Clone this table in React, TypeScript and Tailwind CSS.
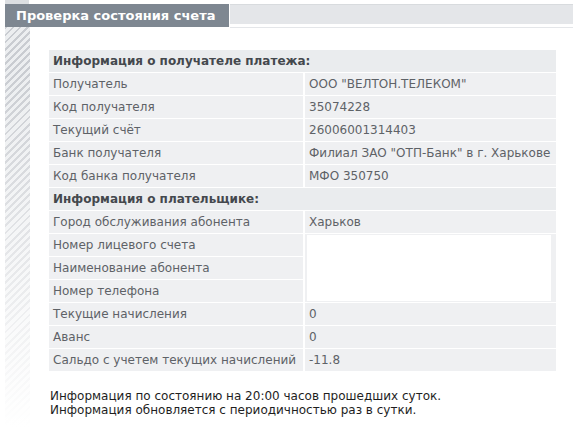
const payee: [string, string][] = [
  ["Получатель", 'ООО "ВЕЛТОН.ТЕЛЕКОМ"'],
  ["Код получателя", "35074228"],
  ["Текущий счёт", "26006001314403"],
  ["Банк получателя", 'Филиал ЗАО "ОТП-Банк" в г. Харькове'],
  ["Код банка получателя", "МФО 350750"],
];

const tail: [string, string][] = [
  ["Текущие начисления", "0"],
  ["Аванс", "0"],
  ["Сальдо с учетем текущих начислений", "-11.8"],
];

function Cell({ children, bold }: { children?: React.ReactNode; bold?: boolean }) {
  return (
    <div
      className={
        "flex items-center bg-[#eff0f2] px-[4px] whitespace-nowrap " +
        (bold ? "font-bold text-[#44484d]" : "text-[#5e6267]")
      }
    >
      {children}
    </div>
  );
}

export default function App() {
  return (
    <div className="w-[573px] h-[427px] overflow-hidden bg-white text-[12px] font-['DejaVu_Sans',Verdana,sans-serif]">
      <div className="ml-[5px] h-[4px] w-[24px] bg-[#dcdfe2]" />

      {/* title bar */}
      <div className="flex ml-[5px] h-[23px]">
        <div className="w-[224px] bg-[#7e8791] text-white font-bold text-[13px] pl-[11px] flex items-center">
          Проверка состояния счета
        </div>
        <div className="flex-1 ml-[1px] bg-[#e4e6e9] border-t border-[#d8dbde] border-b-[3px] border-b-white shadow-[0_1px_0_#e4e6e9]" />
      </div>

      <div className="flex">
        <div className="ml-[5px] w-[25px] h-[400px] bg-[linear-gradient(to_bottom,rgba(255,255,255,0)_10%,rgba(255,255,255,1)_100%),repeating-linear-gradient(135deg,#c9ccd1_0px,#c9ccd1_2px,#eceef0_2px,#eceef0_5px)]" />

        <div className="ml-[19px] mt-[23px]">
          <div className="grid grid-cols-[254px_251px] gap-x-[2px] gap-y-[1px] auto-rows-[22px]">
            <div className="col-span-2 flex items-center bg-[#eaecee] px-[4px] font-bold text-[#44484d]">
              Информация о получателе платежа:
            </div>
            {payee.map(([k, v]) => (
              <>
                <Cell key={k}>{k}</Cell>
                <Cell key={k + "v"}>{v}</Cell>
              </>
            ))}
            <div className="col-span-2 flex items-center bg-[#eaecee] px-[4px] font-bold text-[#44484d]">
              Информация о плательщике:
            </div>
            <Cell>Город обслуживания абонента</Cell>
            <Cell>Харьков</Cell>
            <Cell>Номер лицевого счета</Cell>
            <div className="row-span-3 bg-[#eff0f2] pl-[2px] pr-[5px] py-[1px]">
              <div className="h-full bg-white" />
            </div>
            <Cell>Наименование абонента</Cell>
            <Cell>Номер телефона</Cell>
            {tail.map(([k, v]) => (
              <>
                <Cell key={k}>{k}</Cell>
                <Cell key={k + "v"}>{v}</Cell>
              </>
            ))}
          </div>

          <div className="mt-[18px] pl-[1px] leading-[14px] text-[#1e1e1e]">
            <div>Информация по состоянию на 20:00 часов прошедших суток.</div>
            <div>Информация обновляется с периодичностью раз в сутки.</div>
          </div>
        </div>
      </div>
    </div>
  );
}
